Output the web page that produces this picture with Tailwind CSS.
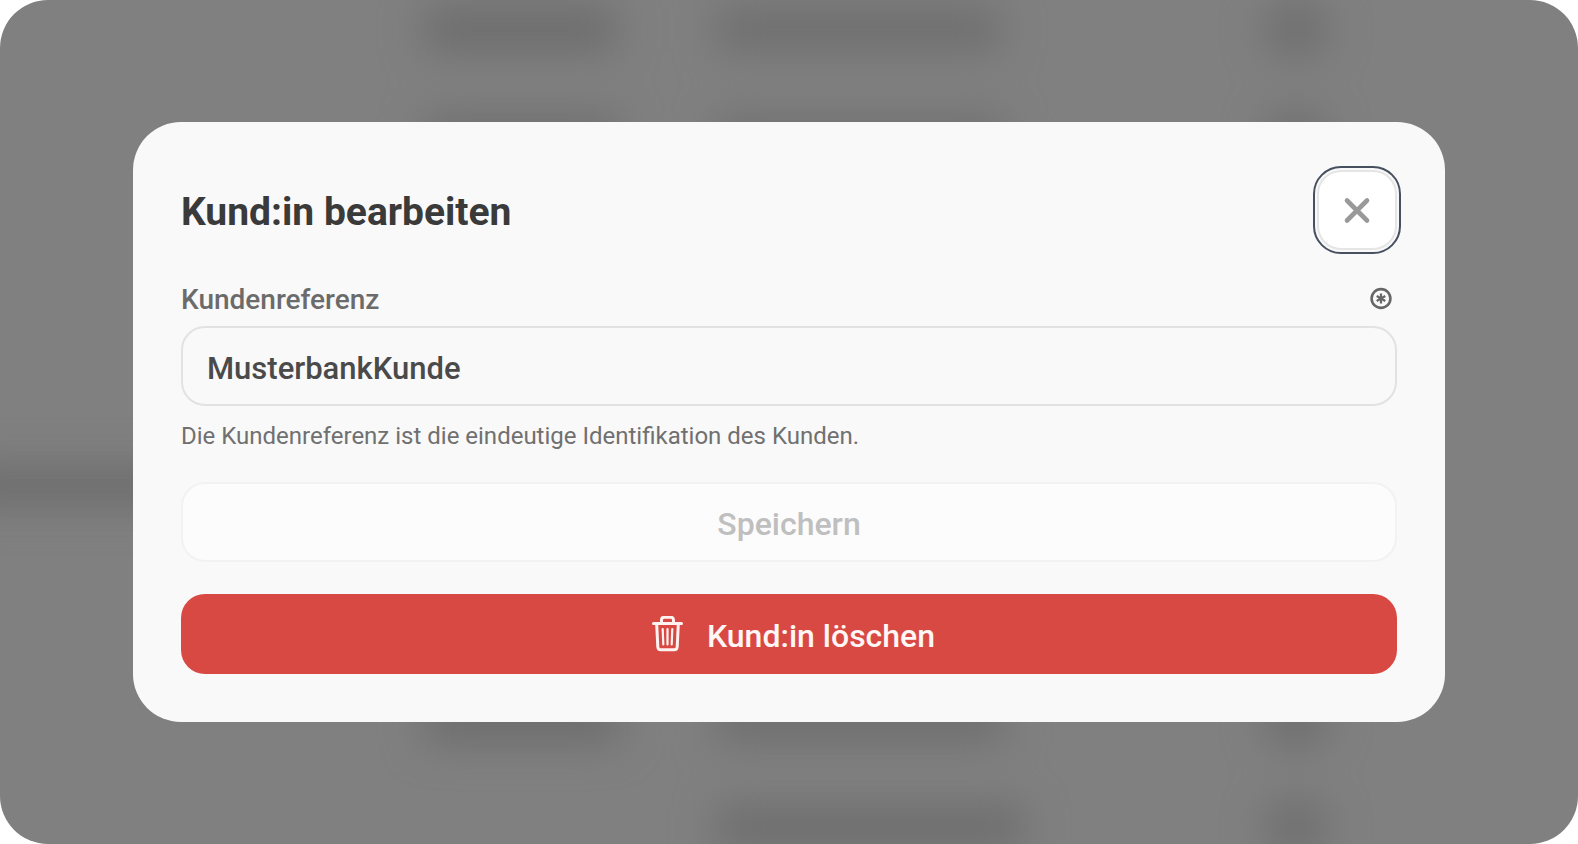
<!DOCTYPE html>
<html lang="de">
<head>
  <meta charset="UTF-8" />
  <meta name="viewport" content="width=device-width, initial-scale=1.0" />
  <title>Kund:in bearbeiten</title>
  <script src="https://cdn.jsdelivr.net/npm/@tailwindcss/browser@4"></script>
</head>
<body class="bg-white font-[Roboto,sans-serif]">
  <div class="relative min-h-screen flex items-center justify-center px-[133px] py-12 rounded-[48px] overflow-hidden bg-[#808080]">

    <!-- Blurred page behind the dialog -->
    <div class="absolute inset-x-0 -top-6 -bottom-9 flex blur-[20px]" aria-hidden="true">
      <div class="w-[424px] pt-[490px]">
        <div class="-ml-10 w-60 h-10 bg-[#6c6c6c]"></div>
      </div>
      <div class="flex-1 flex flex-col justify-between">
        <div>
          <div class="flex items-center h-[106px]">
            <div class="w-[292px]"><div class="w-[192px] h-11 bg-[#6c6c6c]"></div></div>
            <div class="w-[548px]"><div class="w-[284px] h-11 bg-[#6e6e6e]"></div></div>
            <div class="w-16 h-14 rounded-full bg-[#6e6e6e]"></div>
          </div>
          <div class="flex items-center h-[106px]">
            <div class="w-[292px]"><div class="w-[196px] h-10 bg-[#6e6e6e]"></div></div>
            <div class="w-[548px]"><div class="w-[288px] h-10 bg-[#707070]"></div></div>
            <div class="w-16 h-12 rounded-full bg-[#6e6e6e]"></div>
          </div>
        </div>
        <div>
          <div class="flex items-center h-[106px]">
            <div class="w-[292px]"><div class="w-[196px] h-11 bg-[#6c6c6c]"></div></div>
            <div class="w-[548px]"><div class="w-[288px] h-11 bg-[#6e6e6e]"></div></div>
            <div class="w-16 h-14 rounded-full bg-[#6e6e6e]"></div>
          </div>
          <div class="flex items-center h-[106px]">
            <div class="w-[292px]"></div>
            <div class="w-[548px]"><div class="w-[308px] h-11 bg-[#6d6d6d]"></div></div>
            <div class="w-16 h-14 rounded-full bg-[#6e6e6e]"></div>
          </div>
        </div>
      </div>
    </div>

    <!-- Dialog -->
    <form class="relative w-full rounded-[48px] bg-[#f9f9f9] p-12" role="dialog" aria-labelledby="dialog-title">
      <div class="flex items-center justify-between">
        <h1 id="dialog-title" class="pt-1 text-[39px] leading-12 font-bold text-[#3a3a3a]">Kund:in bearbeiten</h1>
        <button type="button" aria-label="Schließen" class="flex items-center justify-center size-20 rounded-3xl bg-white border-2 border-[#e5e5e5] outline-2 outline-offset-2 outline-[#475060]">
          <svg class="size-7" viewBox="0 0 28 28" fill="none" stroke="#999999" stroke-width="4.6" stroke-linecap="round">
            <path d="M4 4.500 24 24.500M24 4.500 4 24.500" />
          </svg>
        </button>
      </div>

      <div class="mt-7">
        <div class="flex items-center justify-between h-10">
          <label for="kundenreferenz" class="pt-1 text-[28px] leading-10 font-medium text-[#6b6b6b]">Kundenreferenz</label>
          <svg class="size-8" viewBox="0 0 32 32" fill="none" stroke="#666666">
            <circle cx="16" cy="16.5" r="9.4" stroke-width="2.6" />
            <path d="M16 11.500v10M11.700 14l8.600 5M20.300 14l-8.600 5" stroke-width="2.200" />
          </svg>
        </div>
        <input id="kundenreferenz" type="text" value="MusterbankKunde" required class="block mt-2 w-full h-20 px-6 pt-1 rounded-3xl border-2 border-[#e2e2e2] bg-[#f9f9f9] text-[31px] font-medium text-[#4a4a4a]" />
        <p class="mt-3 text-2xl leading-9 text-[#707070]">Die Kundenreferenz ist die eindeutige Identifikation des Kunden.</p>
      </div>

      <div class="mt-7 flex flex-col gap-8">
        <button type="submit" disabled class="h-20 pt-1 rounded-3xl border-2 border-[#f2f2f2] bg-[#fcfcfc] text-[32px] font-medium text-[#bfbfbf]">Speichern</button>
        <button type="button" class="flex items-center justify-center gap-6 h-20 pl-2 rounded-3xl bg-[#d84943] text-[32px] font-medium text-[#fff6f5]">
          <svg class="w-8 h-9" viewBox="0 0 32 36" fill="none" stroke="#fff2f1" stroke-linecap="round" stroke-linejoin="round">
            <path d="M2.500 7.500h28" stroke-width="3" />
            <path d="M10.500 7V4q0-2.800 2.800-2.800h6.400q2.800 0 2.800 2.800V7" stroke-width="3" />
            <path d="m5.700 8 1.100 23q.2 2.800 3 2.800h13.400q2.800 0 3-2.800l1.100-23" stroke-width="3" />
            <path d="m11.700 13 .6 15.500M16.500 13v15.500M21.300 13l-.6 15.500" stroke-width="2.200" />
          </svg>
          <span class="pt-1">Kund:in löschen</span>
        </button>
      </div>
    </form>
  </div>
</body>
</html>
